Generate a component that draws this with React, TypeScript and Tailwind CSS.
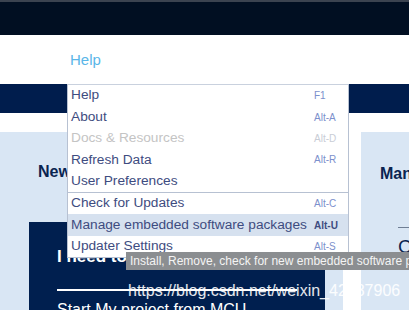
import { Fragment } from 'react';

interface MenuItem {
  label: string;
  shortcut?: string;
  disabled?: boolean;
  active?: boolean;
}

const groups: MenuItem[][] = [
  [
    { label: 'Help', shortcut: 'F1' },
    { label: 'About', shortcut: 'Alt-A' },
    { label: 'Docs & Resources', shortcut: 'Alt-D', disabled: true },
    { label: 'Refresh Data', shortcut: 'Alt-R' },
    { label: 'User Preferences' },
  ],
  [
    { label: 'Check for Updates', shortcut: 'Alt-C' },
    { label: 'Manage embedded software packages', shortcut: 'Alt-U', active: true },
    { label: 'Updater Settings', shortcut: 'Alt-S' },
  ],
];

export default function App() {
  return (
    <div className="relative w-[409px] h-[310px] overflow-hidden bg-white font-['Liberation_Sans',Arial,sans-serif]">
      {/* Top bar */}
      <div className="h-[2px] bg-[#3b4350]" />
      <div className="h-[33px] bg-[#010f22]" />

      {/* Menu strip */}
      <div className="h-[49px] bg-white flex items-center pl-[70px]">
        <span className="text-[15px] text-[#5ab6e8] mt-[2px]">Help</span>
      </div>
      <div className="h-[29px] bg-[#001d4d]" />

      {/* Panels */}
      <div className="flex gap-[18px] pt-[19px]">
        <div className="w-[343px] shrink-0 h-[200px] bg-[#d9e6f4] pt-[32px]">
          <h2 className="pl-[38px] text-[16px] leading-[16px] font-bold text-[#0a2450]">New Project</h2>
          <div className="ml-[29px] mt-[42px] w-[296px] h-[120px] bg-[#001f4f] px-[28px] pt-[25px]">
            <p className="text-[17px] leading-[20px] font-bold text-white">I need to</p>
            <div className="mt-[22px] h-[2px] bg-white" />
            <p className="mt-[10px] text-[16px] leading-[18px] text-white">Start My project from MCU</p>
          </div>
        </div>
        <div className="flex-1 min-w-0 overflow-hidden h-[200px] bg-[#d9e6f4] pt-[34px] pl-[19px] whitespace-nowrap">
          <h2 className="text-[16px] leading-[16px] font-bold text-[#0a2450]">Manage software</h2>
          <div className="ml-[18px] mt-[45px] border-t border-[#6f7e94] pt-[9px]">
            <p className="text-[19px] leading-[20px] text-[#0a2450]">Check</p>
          </div>
        </div>
      </div>

      {/* Dropdown menu */}
      <div className="absolute left-[67px] top-[84px] w-[282px] h-[174px] bg-white border border-[#b7c1d2] border-t-[#c9d1de]">
        {groups.map((group, gi) => (
          <Fragment key={gi}>
            {gi > 0 && <div className="h-px bg-[#b7c1d2]" />}
            {group.map((item) => (
              <div
                key={item.label}
                className={`flex items-center justify-between h-[21.4px] pl-[3px] pr-[11px] whitespace-nowrap ${item.active ? 'bg-[#d6e1ef]' : ''}`}
              >
                <span className={`text-[13.7px] ${item.disabled ? 'text-[#c4c4c4]' : 'text-[#3e4c80]'}`}>{item.label}</span>
                <span
                  className={`w-[23px] text-[10px] whitespace-nowrap ${
                    item.disabled ? 'text-[#c9cdd6]' : item.active ? 'text-[#3e4c80] font-bold' : 'text-[#7c90cc]'
                  }`}
                >
                  {item.shortcut}
                </span>
              </div>
            ))}
          </Fragment>
        ))}
      </div>

      {/* Tooltip */}
      <div className="absolute left-[126px] top-[252px] h-[18px] pl-[4px] pr-[20px] bg-[#8b8e91] flex items-center whitespace-nowrap">
        <span className="text-[12px] text-[#f4f4f4]">Install, Remove, check for new embedded software packages</span>
      </div>

      {/* Watermark */}
      <div className="absolute left-[128px] top-[281px] text-[16px] leading-[20px] text-white/90 whitespace-nowrap">
        https://blog.csdn.net/weixin_42487906
      </div>
    </div>
  );
}
